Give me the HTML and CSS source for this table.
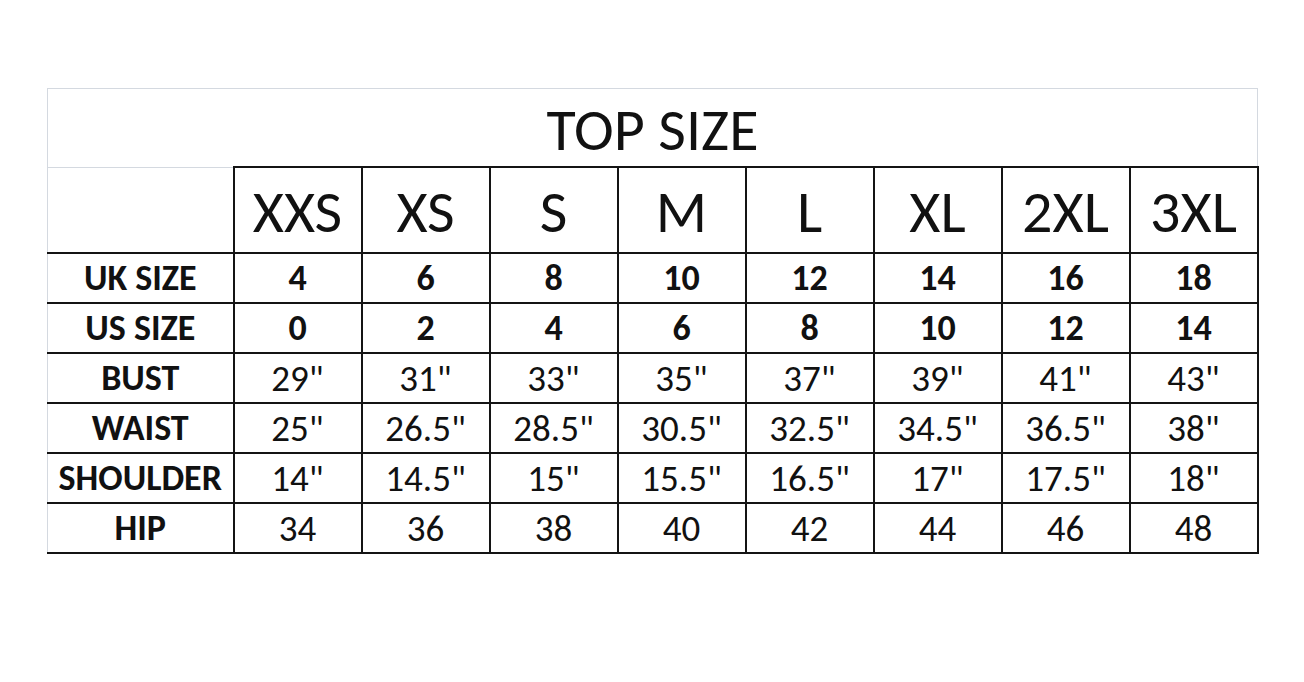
FILE: index.html
```html
<!DOCTYPE html>
<html lang="en">
<head>
<meta charset="utf-8">
<title>Top Size Chart</title>
<link rel="stylesheet" href="styles.css">
</head>
<body>
<main class="page">
  <table class="chart">
    <colgroup>
      <col class="col-label">
      <col class="col-size"><col class="col-size"><col class="col-size"><col class="col-size">
      <col class="col-size"><col class="col-size"><col class="col-size"><col class="col-size">
    </colgroup>
    <thead>
      <tr class="title-row">
        <th colspan="9" class="title">TOP SIZE</th>
      </tr>
      <tr class="size-row">
        <th class="blank"></th>
        <th>XXS</th><th>XS</th><th>S</th><th>M</th><th>L</th><th>XL</th><th>2XL</th><th>3XL</th>
      </tr>
    </thead>
    <tbody>
      <tr class="bold-row">
        <th>UK SIZE</th>
        <td>4</td><td>6</td><td>8</td><td>10</td><td>12</td><td>14</td><td>16</td><td>18</td>
      </tr>
      <tr class="bold-row">
        <th>US SIZE</th>
        <td>0</td><td>2</td><td>4</td><td>6</td><td>8</td><td>10</td><td>12</td><td>14</td>
      </tr>
      <tr>
        <th>BUST</th>
        <td>29"</td><td>31"</td><td>33"</td><td>35"</td><td>37"</td><td>39"</td><td>41"</td><td>43"</td>
      </tr>
      <tr>
        <th>WAIST</th>
        <td>25"</td><td>26.5"</td><td>28.5"</td><td>30.5"</td><td>32.5"</td><td>34.5"</td><td>36.5"</td><td>38"</td>
      </tr>
      <tr>
        <th>SHOULDER</th>
        <td>14"</td><td>14.5"</td><td>15"</td><td>15.5"</td><td>16.5"</td><td>17"</td><td>17.5"</td><td>18"</td>
      </tr>
      <tr>
        <th>HIP</th>
        <td>34</td><td>36</td><td>38</td><td>40</td><td>42</td><td>44</td><td>46</td><td>48</td>
      </tr>
    </tbody>
  </table>
</main>
</body>
</html>
```

FILE: styles.css
```css
html, body {
  margin: 0;
  padding: 0;
  background: #ffffff;
}

.page {
  padding: 88px 0 0 47px;
  font-family: Carlito, Calibri, Lato, "Open Sans", sans-serif;
  color: #111111;
}

.chart {
  border-collapse: collapse;
  table-layout: fixed;
  width: 1210px;
}

.col-label { width: 186px; }
.col-size { width: 128px; }

.chart th,
.chart td {
  padding: 0;
  text-align: center;
  vertical-align: middle;
  border: 2px solid #141414;
  line-height: 1;
  white-space: nowrap;
}

/* title row: light grey frame */
.title-row .title {
  height: 73px;
  font-size: 60px;
  font-weight: 400;
  border: 1px solid #d4d9e0;
  padding-top: 4px;
}

.size-row th {
  height: 80px;
  font-size: 60px;
  font-weight: 400;
  padding-top: 4px;
}

.size-row .blank {
  border-left: 1px solid #d4d9e0;
  border-top: 1px solid #d4d9e0;
}

.chart tbody th {
  height: 48px;
  font-size: 36px;
  font-weight: 700;
  border-left: 1px solid #d4d9e0;
}

.chart tbody td {
  height: 48px;
  font-size: 37px;
  font-weight: 400;
}

.chart tbody .bold-row td {
  font-weight: 700;
  font-size: 36px;
}
```
